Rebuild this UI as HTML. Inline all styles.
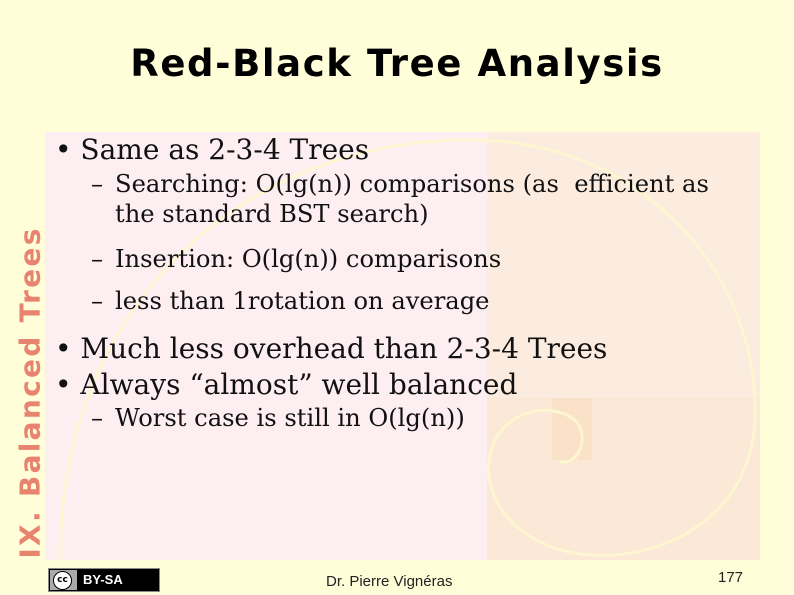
<!DOCTYPE html>
<html><head><style>
body{margin:0;width:794px;height:595px;background:#fffed8;position:relative;overflow:hidden;font-family:"DejaVu Serif",serif}
.a{position:absolute;white-space:nowrap;color:#111}
.b{font-size:28px}
.s{font-size:24.2px}
.d{position:absolute;left:-24px}
</style></head><body>
<div style="position:absolute;left:45px;top:132px;width:715px;height:428px;background:#fdeef2"></div>
<div style="position:absolute;left:487px;top:132px;width:273px;height:428px;background:#fcecdf"></div>
<div style="position:absolute;left:487px;top:398px;width:273px;height:162px;background:#fbe8d6"></div>
<div style="position:absolute;left:552px;top:398px;width:40px;height:62px;background:#f9e2c8"></div>
<svg style="position:absolute;left:0;top:0" width="794" height="595">
<path d="M60 560 C60 300 250 135 480 140 C650 145 760 280 755 420 C750 520 660 560 590 555 C520 550 480 500 490 455 C500 410 550 400 575 420 C590 435 580 465 560 462" fill="none" stroke="#fdf6d0" stroke-width="3"/>
</svg>
<div class="a" style="left:0;width:794px;text-align:center;top:42px;font:bold 37px 'DejaVu Sans',sans-serif;letter-spacing:1.6px;color:#000">Red-Black Tree Analysis</div>
<div class="a" style="left:-145px;top:376px;width:350px;transform:rotate(-90deg);font:bold 28px 'DejaVu Sans',sans-serif;color:#e8836f;letter-spacing:2.3px;text-align:center">IX. Balanced Trees</div>
<div class="a b" style="left:55px;top:133px">• Same as 2-3-4 Trees</div>
<div class="a s" style="left:115px;top:170px"><span class="d">–</span>Searching: O(lg(n)) comparisons (as&nbsp; efficient as</div>
<div class="a s" style="left:115px;top:200px">the standard BST search)</div>
<div class="a s" style="left:115px;top:245px"><span class="d">–</span>Insertion: O(lg(n)) comparisons</div>
<div class="a s" style="left:115px;top:287px"><span class="d">–</span>less than 1rotation on average</div>
<div class="a b" style="left:55px;top:332px">• Much less overhead than 2-3-4 Trees</div>
<div class="a b" style="left:55px;top:368px">• Always “almost” well balanced</div>
<div class="a s" style="left:115px;top:404px"><span class="d">–</span>Worst case is still in O(lg(n))</div>
<div style="position:absolute;left:48px;top:568px;width:112px;height:24px;background:#000;border:1px solid #888;box-sizing:border-box">
<div style="position:absolute;left:1px;top:1px;width:27px;height:20px;background:#aaa"></div>
<div style="position:absolute;left:4px;top:2px;width:17px;height:17px;border-radius:50%;background:#fff;border:1px solid #000;font:bold 9px 'DejaVu Sans',sans-serif;line-height:17px;text-align:center;color:#000">cc</div>
<div style="position:absolute;left:34px;top:3px;font:bold 13px 'Liberation Sans',sans-serif;color:#fff">BY-SA</div>
</div>
<div class="a" style="left:326px;top:573px;font:15px 'Liberation Sans',sans-serif;color:#222">Dr. Pierre Vignéras</div>
<div class="a" style="left:718px;top:569px;font:15px 'Liberation Sans',sans-serif;color:#222">177</div>
</body></html>
